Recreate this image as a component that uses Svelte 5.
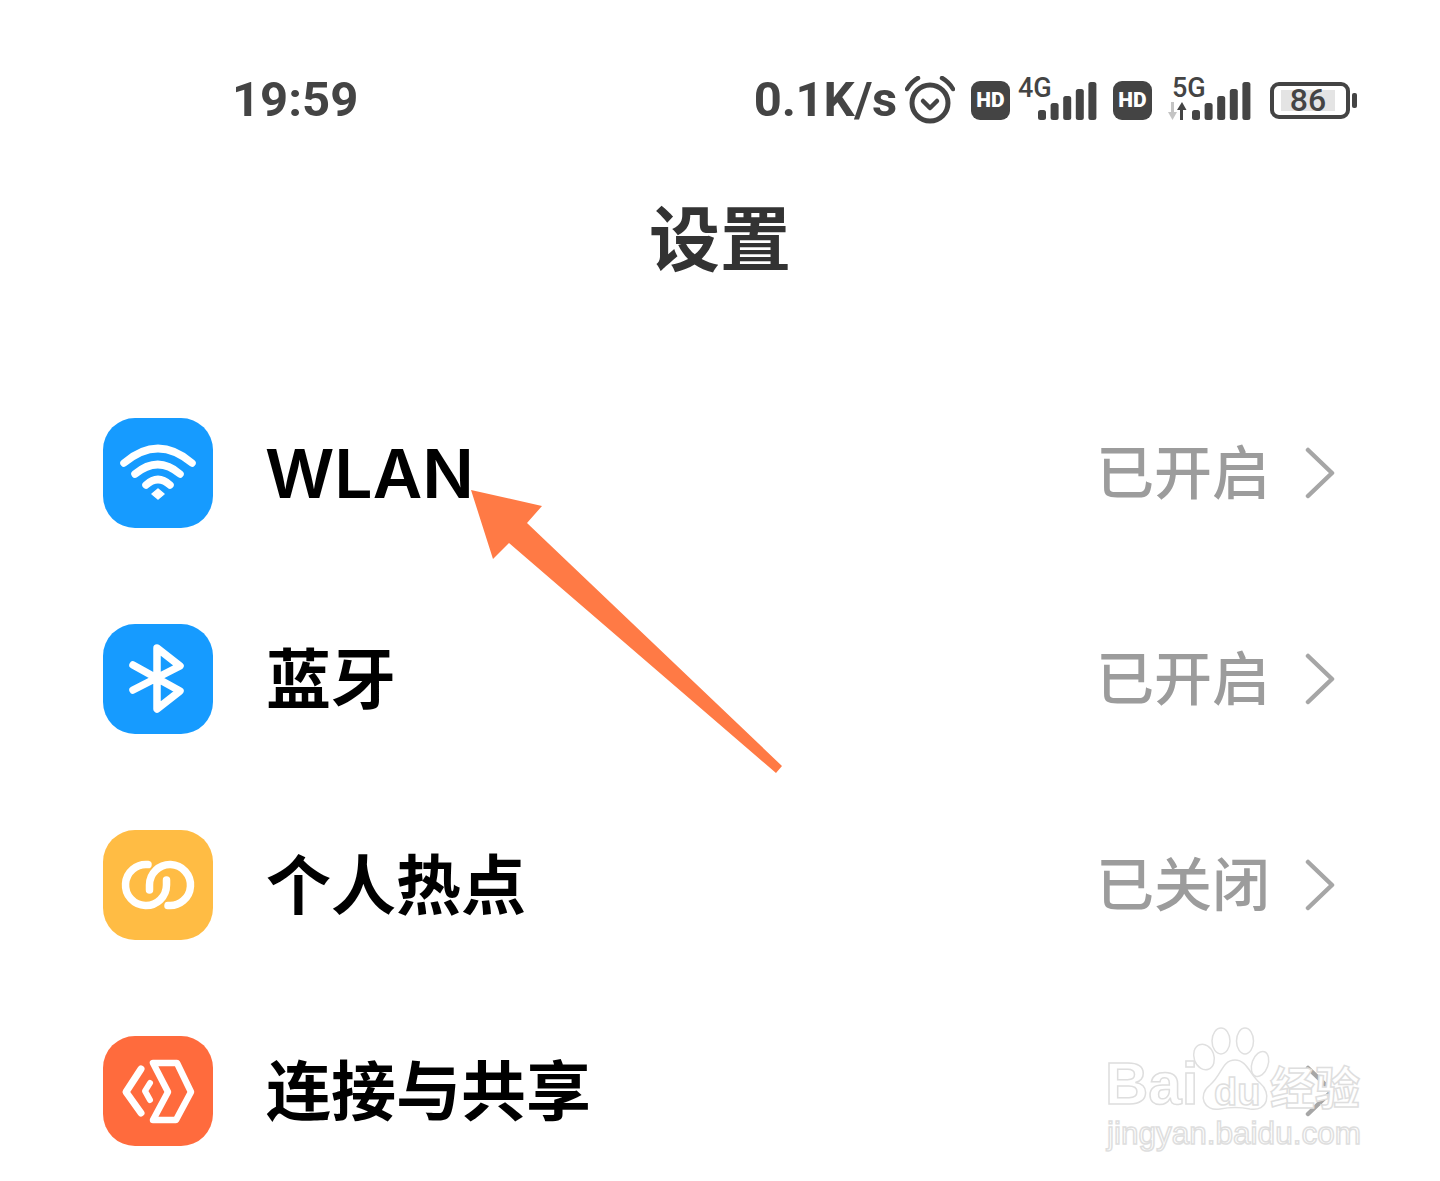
<script>
  const rows = [
    { id: "wifi", label: "WLAN", value: "已开启", color: "#169bff" },
    { id: "bt", label: "蓝牙", value: "已开启", color: "#169bff" },
    { id: "hotspot", label: "个人热点", value: "已关闭", color: "#ffbc44" },
    { id: "share", label: "连接与共享", value: "", color: "#ff6b3d" }
  ];
  const bars = [0, 1, 2, 3, 4];
</script>

{#snippet signal()}
  <svg class="signal" viewBox="0 0 59 38" width="59" height="38">
    {#each bars as b}
      <rect x={b * 12.6} y={28 - b * 7} width="8" height={10 + b * 7} rx="2.5" fill="#444" />
    {/each}
  </svg>
{/snippet}

<div class="page">
  <header class="status">
    <span class="time">19:59</span>
    <div class="indicators">
      <span class="speed">0.1K/s</span>
      <svg class="alarm" viewBox="0 0 50 48" width="50" height="48" fill="none" stroke="#444" stroke-width="5">
        <circle cx="25" cy="27" r="18" />
        <path d="M18 25l7 7 7-7" stroke-width="4.500" stroke-linecap="round" stroke-linejoin="round" />
        <path d="M2 13Q6 6 13 2M48 13Q44 6 37 2" stroke-width="4.500" stroke-linecap="round" />
      </svg>
      <span class="hd">HD</span>
      <div class="net">
        <span class="gen">4G</span>
        {@render signal()}
      </div>
      <span class="hd second">HD</span>
      <div class="net five">
        <span class="gen">5G</span>
        <svg class="updown" viewBox="0 0 20 18" width="20" height="18">
          <path d="M4 0h3v10h3l-4.500 8L1 10h3z" fill="#c4c4c4" />
          <path d="M13 18V8h-3l5-8 4.500 8H16v10z" fill="#444" />
        </svg>
        {@render signal()}
      </div>
      <div class="battery">
        <div class="level"></div>
        <span class="pct">86</span>
      </div>
      <span class="nub"></span>
    </div>
  </header>

  <h1 class="title">设置</h1>

  <ul class="list">
    {#each rows as row}
      <li class="row">
        <div class="icon" style="background: {row.color}">
          <svg viewBox="0 0 110 110" width="110" height="110" fill="none" stroke="#fff" stroke-linecap="round" stroke-linejoin="round">
            {#if row.id === "wifi"}
              <path d="M21 45Q55 16 89 45M32 56Q55 37 77 56M43 67Q55 56 67 67" stroke-width="7.500" />
              <path d="M49 76l6-5 6 5-6 5z" fill="#fff" stroke-width="1.500" />
            {:else if row.id === "bt"}
              <path d="M30 41L77 67 54 85V24L77 42 30 66" stroke-width="7.500" />
            {:else if row.id === "hotspot"}
              <path d="M45 34.600A20.500 20.500 0 1 0 63.500 55V50" stroke-width="7.500" />
              <path d="M46.500 60V55A20.500 20.500 0 1 1 65 75.500" stroke-width="7.500" />
            {:else}
              <path d="M50 27H74L88 56 73 84H50L65 56Z" stroke-width="6.500" />
              <path d="M38 33L23 56 38 77" stroke-width="7" />
              <path d="M47 47L42 55 47 64" stroke-width="6" />
            {/if}
          </svg>
        </div>
        <span class="label" class:latin={row.id === "wifi"}>{row.label}</span>
        <span class="value">{row.value}</span>
        <svg class="chev" viewBox="0 0 30 52" width="30" height="52" fill="none" stroke="#a6a6a6" stroke-width="4.500" stroke-linecap="round" stroke-linejoin="round">
          <path d="M3 3L27 26 3 49" />
        </svg>
      </li>
    {/each}
  </ul>

  <!-- hand drawn arrow annotation on top of the screenshot -->
  <svg class="arrow" viewBox="0 0 1440 1181" width="1440" height="1181">
    <path d="M471 490L542 506 527 523 782 766 776 773 509 543 493 559Z" fill="#ff7a45" />
  </svg>

  <!-- baidu watermark -->
  <div class="mark">
    <svg class="paw" viewBox="0 0 130 90" width="130" height="90" fill="#fff" stroke="#e0e0e0" stroke-width="1.500">
      <ellipse cx="32" cy="30" rx="10" ry="13" transform="rotate(-20 32 30)" />
      <ellipse cx="49" cy="14" rx="9" ry="13" />
      <ellipse cx="73" cy="14" rx="8.500" ry="13" />
      <ellipse cx="88" cy="37" rx="8" ry="13" transform="rotate(20 88 37)" />
      <path d="M63 33C75 33 78 48 88 56 100 66 96 85 78 82 68 80 58 80 48 82 32 85 25 68 38 58 50 48 50 33 63 33Z" />
    </svg>
    <span class="bai">Bai</span>
    <span class="du">du</span>
    <span class="jy">经验</span>
    <span class="url">jingyan.baidu.com</span>
  </div>
</div>

<style>
  :global(body) {
    background: #fff;
  }
  .page {
    position: relative;
    width: 1440px;
    height: 1181px;
    overflow: hidden;
    background: #fff;
    font-family: "Noto Sans CJK SC", "Noto Sans", sans-serif;
  }
  .status {
    display: flex;
    justify-content: space-between;
    align-items: center;
    height: 48px;
    padding: 76px 83px 0 232px;
    color: #444;
    font-family: Roboto, sans-serif;
    font-weight: 700;
  }
  .time {
    font-size: 49px;
    line-height: 48px;
  }
  .indicators {
    display: flex;
    align-items: center;
  }
  .speed {
    font-size: 49px;
    line-height: 48px;
    letter-spacing: -0.3px;
    margin-right: 8px;
  }
  .hd {
    width: 39px;
    height: 39px;
    margin: 0 8px 0 16px;
    border-radius: 9px;
    background: #444;
    color: #fff;
    font-size: 21px;
    font-weight: 900;
    line-height: 39px;
    text-align: center;
  }
  .hd.second {
    margin: 0 15px 0 16px;
  }
  .net {
    position: relative;
    width: 79px;
    height: 44px;
    display: flex;
    justify-content: flex-end;
    align-items: flex-end;
  }
  .net.five {
    width: 84px;
  }
  .signal {
    margin-bottom: 2px;
  }
  .gen {
    position: absolute;
    top: -3px;
    left: 0;
    font-size: 27px;
    line-height: 26px;
    font-weight: 500;
  }
  .five .gen {
    left: 5px;
  }
  .updown {
    position: absolute;
    left: 0;
    bottom: 2px;
  }
  .battery {
    position: relative;
    box-sizing: border-box;
    width: 80px;
    height: 37px;
    margin-left: 19px;
    border: 4px solid #444;
    border-radius: 9px;
    display: flex;
    align-items: center;
    justify-content: center;
  }
  .level {
    position: absolute;
    left: 7px;
    top: 4px;
    bottom: 4px;
    width: 54px;
    background: #e4e4e4;
  }
  .pct {
    position: relative;
    right: 2px;
    font-size: 32px;
    font-weight: 500;
    line-height: 29px;
  }
  .nub {
    width: 5px;
    height: 15px;
    margin-left: 2px;
    border-radius: 2px;
    background: #444;
  }
  .title {
    margin: 0;
    padding-top: 60px;
    text-align: center;
    color: #333;
    font-size: 71px;
    font-weight: 700;
    line-height: 100px;
  }
  .list {
    list-style: none;
    margin: 0;
    padding: 134px 105px 0 103px;
    display: flex;
    flex-direction: column;
    gap: 96px;
  }
  .row {
    display: flex;
    align-items: center;
    height: 110px;
  }
  .icon {
    width: 110px;
    height: 110px;
    border-radius: 32px;
    flex: none;
  }
  .icon svg {
    display: block;
  }
  .label {
    flex: 1;
    margin-left: 53px;
    padding-bottom: 8px;
    color: #000;
    font-size: 65px;
    font-weight: 700;
    line-height: 80px;
  }
  .label.latin {
    margin-left: 52px;
    padding-bottom: 0;
    font-family: Inter, sans-serif;
    font-size: 68px;
    font-weight: 600;
  }
  .value {
    padding-bottom: 8px;
    color: #9c9c9c;
    font-size: 58px;
    font-weight: 500;
    line-height: 70px;
  }
  .chev {
    margin-left: 35px;
  }
  .arrow {
    position: absolute;
    left: 0;
    top: 0;
  }
  .mark {
    position: absolute;
    left: 1105px;
    top: 1027px;
    width: 260px;
    height: 125px;
    color: #fff;
    font-family: "Liberation Sans", sans-serif;
    -webkit-text-stroke: 1.5px #dedede;
  }
  .mark span {
    position: absolute;
  }
  .paw {
    position: absolute;
    left: 67px;
    top: 0;
  }
  .bai {
    left: 0;
    top: 27px;
    font-size: 60px;
    font-weight: 700;
    line-height: 60px;
  }
  .du {
    left: 109px;
    top: 43px;
    font-size: 38px;
    font-weight: 700;
    line-height: 44px;
  }
  .jy {
    left: 165px;
    top: 32px;
    font-family: "Noto Sans CJK SC", sans-serif;
    font-size: 45px;
    font-weight: 700;
    line-height: 54px;
  }
  .url {
    left: 2px;
    top: 89px;
    font-size: 31.500px;
    line-height: 34px;
    white-space: nowrap;
  }
</style>
